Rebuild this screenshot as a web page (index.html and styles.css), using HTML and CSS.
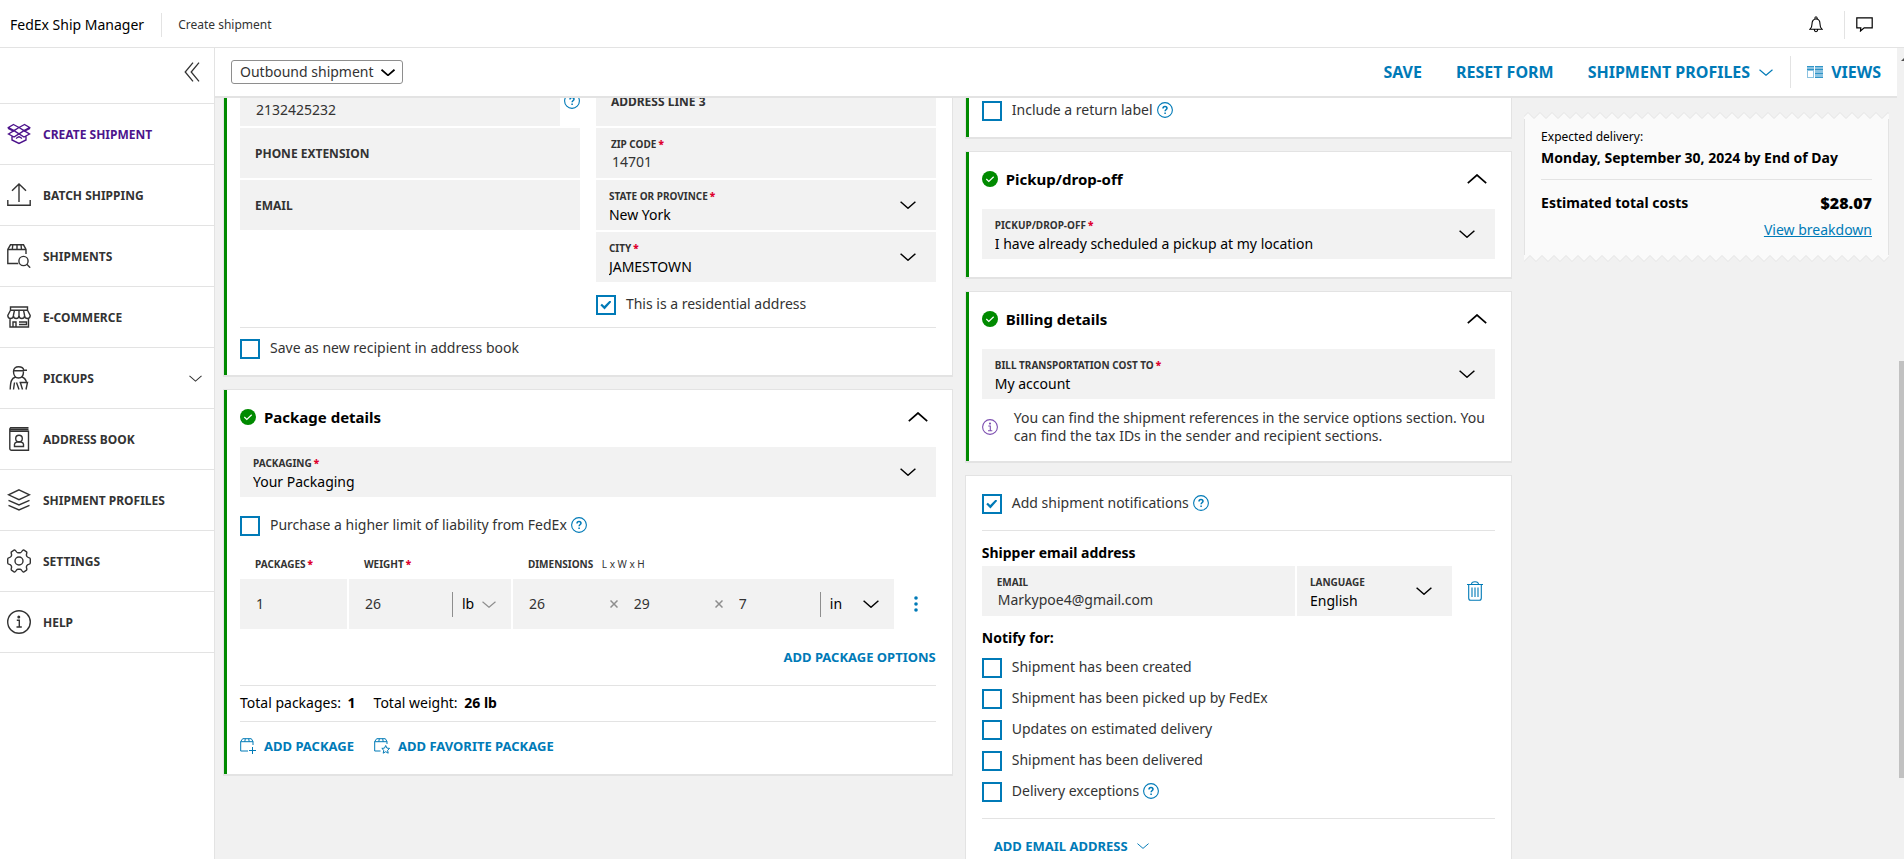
FILE: index.html
```html
<!DOCTYPE html>
<html lang="en">
<head>
<meta charset="utf-8">
<meta name="viewport" content="width=device-width, initial-scale=1">
<title>FedEx Ship Manager - Create shipment</title>
<link rel="stylesheet" href="styles.css">
</head>
<body>
<svg class="sprite" aria-hidden="true">
  <defs>
    <symbol id="chevron-down" viewBox="0 0 16 8"><path d="M.6.8 8 7.2 15.4.8"/></symbol>
    <symbol id="chevron-up" viewBox="0 0 20 10"><path d="M.8 9.2 10 1l9.2 8.2"/></symbol>
    <symbol id="help" viewBox="0 0 16 16"><circle cx="8" cy="8" r="7.4"/><path stroke-width="1.5" d="M6 6.400c0-1.300.9-2 2-2s2 .8 2 1.800c0 1.200-1.900 1.400-1.900 3.100M8.100 10.600v1.300"/></symbol>
    <symbol id="done" viewBox="0 0 16 16"><circle cx="8" cy="8" r="8" fill="#008a00" stroke="none"/><path stroke="#fff" stroke-width="1.200" d="m4.300 8 2.500 2.400L11.700 5.700"/></symbol>
  </defs>
</svg>

<header class="topbar">
  <span class="brand">FedEx Ship Manager</span>
  <span class="crumb">Create shipment</span>
  <div class="topbar-actions">
    <button class="icon-button" type="button" aria-label="Notifications">
      <svg class="icon bell" viewBox="0 0 14 17"><path d="M1 13.300c1.700-1.300 2-3 2-5.300 0-3 1.400-5 4-5s4 2 4 5c0 2.300.3 4 2 5.300ZM5.800 2.800C5.800 1.300 6.200.8 7 .8s1.200.5 1.200 2M5.300 13.800c.1 1.200.7 1.900 1.700 1.900s1.600-.7 1.700-1.900"/></svg>
    </button>
    <button class="icon-button feedback" type="button" aria-label="Feedback">
      <svg class="icon chat" viewBox="0 0 17 15"><path d="M.8.8h15.400v10H8.200L4.500 14l.3-3.200h-4Z"/></svg>
    </button>
  </div>
</header>

<div class="shell">
  <nav class="sidebar" aria-label="Main">
    <div class="collapse">
      <button class="icon-button" type="button" aria-label="Collapse menu">
        <svg class="icon collapse-icon" viewBox="0 0 16 20"><path d="M9 .6 1.200 10 9 19.400M15 .6 7.200 10l7.800 9.400"/></svg>
      </button>
    </div>
    <a class="nav-item active" href="#create">
      <svg class="icon nav-icon" viewBox="0 0 24 24"><path d="M6.500 2.500 12 5.500l5.500-3L22.500 5.500 17 8.600 12 5.500 7 8.600 1.500 5.500ZM1.500 5.500v1L7 9.500M1.500 12 7 8.600l5 3.200 5-3.200 5.500 3.400L17 15l-5-3.200L7 15ZM5 14v4l7 3.500 7-3.500v-4M12 5.500 7 8.600M12 14.500 9 16.500M12 14.500l3 2M22.500 5.500v1L17 9.500"/></svg>
      <span>CREATE SHIPMENT</span>
    </a>
    <a class="nav-item" href="#batch">
      <svg class="icon nav-icon" viewBox="0 0 24 24"><path d="M.8 17v5.200h22.400V17M12 19V1M5 7.800 12 1l7 6.800"/></svg>
      <span>BATCH SHIPPING</span>
    </a>
    <a class="nav-item" href="#shipments">
      <svg class="icon nav-icon" viewBox="0 0 24 24"><path d="M19 10V5.500L16.500.800h-13L.800 5.500V19.500h10.500M.800 5.500H19M10 .800v4.700M5.800.800 5.300 5.500M14 .800l.5 4.700"/><circle cx="16.500" cy="17" r="4.600"/><path d="m19.800 20.300 3.400 3.400"/></svg>
      <span>SHIPMENTS</span>
    </a>
    <a class="nav-item" href="#commerce">
      <svg class="icon nav-icon" viewBox="0 0 24 24"><path d="M3.500 2h17v3.200h-17ZM3.500 5.200.800 10.500c0 4 5.600 4 5.600 0 0 4 5.600 4 5.600 0 0 4 5.600 4 5.600 0 0 4 5.600 4 5.600 0L20.500 5.200M7.500 5.200 6.400 10.500M12 5.200v5.300M16.500 5.200l1.100 5.300M3 13.500V22h18.500v-8.500M6 22v-5h3v5M12 17h7.500v2.500H12"/></svg>
      <span>E-COMMERCE</span>
    </a>
    <a class="nav-item" href="#pickups">
      <svg class="icon nav-icon" viewBox="0 0 24 24"><path d="M6.500 5.500C6.500 2.500 8.500.800 11.500.800S16.500 2.500 16.700 4.300H20M6.500 4.700h10M6.500 5.500c0 4 2 6.500 5 6.500s5-2.500 5-6.500M8.500 11C4.500 12.500 3.500 15 3.200 23.500M15 11c2.500 1 4 2.500 4.500 5.500M7.500 16.500 6.500 23.500M9.500 16.500l2.500 7M12.500 16.500h8l-1.500 7M13.500 17l2 6.500"/></svg>
      <span>PICKUPS</span>
      <svg class="icon nav-chevron"><use href="#chevron-down"/></svg>
    </a>
    <a class="nav-item" href="#addresses">
      <svg class="icon nav-icon" viewBox="0 0 24 24"><path d="M21.500.800H3.500C2.500 1.500 2.500 3.500 3.500 4.200h18V23.300H4.500c-1 0-1.700-.6-1.700-1.700V2.500M3.500 2.500h18M7.500 19.500v-2.300c0-1 .7-1.700 2.300-2.200h4.400c1.600.5 2.300 1.200 2.300 2.200v2.300Z"/><circle cx="12" cy="11.500" r="3.300"/></svg>
      <span>ADDRESS BOOK</span>
    </a>
    <a class="nav-item" href="#profiles">
      <svg class="icon nav-icon" viewBox="0 0 24 24"><path d="m12 1.800 10.500 5L12 11.700 1.500 6.800ZM1.500 12.300 12 17l10.500-4.700M1.500 17.300 12 22l10.500-4.700"/></svg>
      <span>SHIPMENT PROFILES</span>
    </a>
    <a class="nav-item" href="#settings">
      <svg class="icon nav-icon" viewBox="0 0 24 24"><circle cx="12" cy="12" r="4"/><path d="M4.500 2.800 7.300 1c1.700-.4 1.700 2.600 3.500 2.800h2.400C15 3.600 15 .6 16.700 1l2.800 1.800c1.200 1.200-1.200 3 .5 4.700.8 1.600 3.300.6 3.300 2.600v3.800c0 2-2.500 1-3.300 2.600-1.700 1.700.7 3.500-.5 4.700L16.700 23c-1.700.4-1.700-2.600-3.500-2.800h-2.400C9 20.400 9 23.400 7.300 23l-2.800-1.800c-1.200-1.200 1.200-3-.5-4.700C3.200 14.900.700 15.900.700 13.900v-3.800c0-2 2.500-1 3.300-2.600 1.700-1.700-.7-3.500.5-4.700Z"/></svg>
      <span>SETTINGS</span>
    </a>
    <a class="nav-item" href="#help-center">
      <svg class="icon nav-icon" viewBox="0 0 24 24"><circle cx="12" cy="12" r="11.300"/><path d="M9.800 10.300H12.300V17M9.500 17h5.300"/><circle cx="11.800" cy="7" r=".8" fill="currentColor"/></svg>
      <span>HELP</span>
    </a>
  </nav>

  <main class="workspace">
    <div class="toolbar">
      <div class="direction">
        <select aria-label="Shipment direction"><option>Outbound shipment</option></select>
        <svg class="icon chev-14"><use href="#chevron-down"/></svg>
      </div>
      <div class="toolbar-actions">
        <button class="link-button" type="button">SAVE</button>
        <button class="link-button" type="button">RESET FORM</button>
        <button class="link-button" type="button">SHIPMENT PROFILES <svg class="icon chev-14"><use href="#chevron-down"/></svg></button>
        <button class="link-button views" type="button">
          <svg class="views-icon" viewBox="0 0 16 12"><path fill="#8cc3e1" d="M0 0h7v12H0zM8 0h8v12H8z"/><path fill="#fff" d="M1 5h5v6H1z"/><path fill="none" stroke="#2f95c8" d="M0 .5h7M0 3.500h7M8 .5h8M8 3.500h8M8 7.500h8M8 11.500h8"/></svg>
          VIEWS
        </button>
      </div>
    </div>

    <div class="scroller">
      <div class="columns">
        <div class="column">
          <section class="card done recipient" aria-label="Recipient">
            <div class="split">
              <div class="stack">
                <div class="with-help">
                  <div class="field"><div class="field-text value-only"><input type="text" aria-label="Phone number" value="2132425232"></div></div>
                  <button class="help-button" type="button" aria-label="Phone help"><svg class="icon help-icon"><use href="#help"/></svg></button>
                </div>
                <div class="field empty"><label for="ext">PHONE EXTENSION</label><input id="ext" type="text"></div>
                <div class="field empty"><label for="mail">EMAIL</label><input id="mail" type="email"></div>
              </div>
              <div class="stack">
                <div class="field empty"><label for="line3">ADDRESS LINE 3</label><input id="line3" type="text"></div>
                <div class="field"><div class="field-text"><label for="zip">ZIP CODE<b>*</b></label><input id="zip" type="text" value="14701"></div></div>
                <div class="field picker"><div class="field-text"><label for="state">STATE OR PROVINCE<b>*</b></label><select id="state"><option>New York</option></select></div><svg class="icon chev-16"><use href="#chevron-down"/></svg></div>
                <div class="field picker"><div class="field-text"><label for="city">CITY<b>*</b></label><select id="city"><option>JAMESTOWN</option></select></div><svg class="icon chev-16"><use href="#chevron-down"/></svg></div>
                <div class="check residential"><input id="res" type="checkbox" checked><label for="res">This is a residential address</label></div>
              </div>
            </div>
            <div class="check save-recipient"><input id="save" type="checkbox"><label for="save">Save as new recipient in address book</label></div>
          </section>

          <section class="card done package">
            <div class="card-head">
              <svg class="icon status"><use href="#done"/></svg>
              <h2>Package details</h2>
              <button class="icon-button" type="button" aria-label="Collapse package details"><svg class="icon chev-20"><use href="#chevron-up"/></svg></button>
            </div>
            <div class="field picker"><div class="field-text"><label for="packaging">PACKAGING<b>*</b></label><select id="packaging"><option>Your Packaging</option></select></div><svg class="icon chev-16"><use href="#chevron-down"/></svg></div>
            <div class="check liability"><input id="liab" type="checkbox"><label for="liab">Purchase a higher limit of liability from FedEx</label><button class="help-button" type="button" aria-label="Liability help"><svg class="icon help-icon"><use href="#help"/></svg></button></div>
            <div class="package-grid package-labels">
              <label for="count">PACKAGES<b>*</b></label>
              <label for="weight">WEIGHT<b>*</b></label>
              <label for="length">DIMENSIONS <span>L x W x H</span></label>
            </div>
            <div class="package-grid">
              <div class="field measures"><input id="count" type="text" value="1"></div>
              <div class="field measures">
                <input id="weight" type="text" value="26">
                <div class="unit"><select class="unit-lb" aria-label="Weight unit"><option>lb</option></select><svg class="icon chev-14 muted"><use href="#chevron-down"/></svg></div>
              </div>
              <div class="field measures">
                <input id="length" type="text" value="26"><svg class="icon times" viewBox="0 0 8 8"><path d="m.5.5 7 7m0-7-7 7"/></svg>
                <input type="text" aria-label="Width" value="29"><svg class="icon times" viewBox="0 0 8 8"><path d="m.5.5 7 7m0-7-7 7"/></svg>
                <input type="text" aria-label="Height" value="7">
                <div class="unit"><select class="unit-in" aria-label="Dimension unit"><option>in</option></select><svg class="icon chev-16"><use href="#chevron-down"/></svg></div>
              </div>
              <button class="icon-button more" type="button" aria-label="More options"><svg viewBox="0 0 4 16"><circle cx="2" cy="2" r="1.800"/><circle cx="2" cy="8" r="1.800"/><circle cx="2" cy="14" r="1.800"/></svg></button>
            </div>
            <div class="options-row"><button class="link-button small" type="button">ADD PACKAGE OPTIONS</button></div>
            <div class="totals"><span>Total packages: <strong>1</strong></span><span>Total weight: <strong>26 lb</strong></span></div>
            <div class="package-actions">
              <button class="link-button small" type="button"><svg class="icon box-icon" viewBox="0 0 16 16"><path d="M13 7V3.500L11.300.7H2.700L.700 3.500V13H8M.700 3.700H13M5.300.7 4.800 3.700M8.700.7l.5 3M12.500 9v7M9 12.500h7"/></svg>ADD PACKAGE</button>
              <button class="link-button small" type="button"><svg class="icon box-icon" viewBox="0 0 16 16"><path d="M13 6V3.500L11.300.7H2.700L.700 3.500V13H6.500M.700 3.700H13M5.300.7 4.800 3.700M8.700.7l.5 3M11.700 7.500l1.200 2.600 2.700.3-2 1.900.6 2.900-2.500-1.500-2.500 1.500.6-2.900-2-1.900 2.700-.3Z"/></svg>ADD FAVORITE PACKAGE</button>
            </div>
          </section>
        </div>

        <div class="column">
          <section class="card done return-label" aria-label="Return label">
            <div class="check"><input id="ret" type="checkbox"><label for="ret">Include a return label</label><button class="help-button" type="button" aria-label="Return label help"><svg class="icon help-icon"><use href="#help"/></svg></button></div>
          </section>

          <section class="card done pickup">
            <div class="card-head">
              <svg class="icon status"><use href="#done"/></svg>
              <h2>Pickup/drop-off</h2>
              <button class="icon-button" type="button" aria-label="Collapse pickup"><svg class="icon chev-20"><use href="#chevron-up"/></svg></button>
            </div>
            <div class="field picker"><div class="field-text"><label for="pickup">PICKUP/DROP-OFF<b>*</b></label><select id="pickup"><option>I have already scheduled a pickup at my location</option></select></div><svg class="icon chev-16"><use href="#chevron-down"/></svg></div>
          </section>

          <section class="card done">
            <div class="card-head">
              <svg class="icon status"><use href="#done"/></svg>
              <h2>Billing details</h2>
              <button class="icon-button" type="button" aria-label="Collapse billing"><svg class="icon chev-20"><use href="#chevron-up"/></svg></button>
            </div>
            <div class="field picker"><div class="field-text"><label for="bill">BILL TRANSPORTATION COST TO<b>*</b></label><select id="bill"><option>My account</option></select></div><svg class="icon chev-16"><use href="#chevron-down"/></svg></div>
            <div class="note">
              <svg class="icon info-icon" viewBox="0 0 16 16"><circle cx="8" cy="8" r="7.400"/><path d="M6.300 7H8.300v4.800M6 11.800h4.300"/><circle cx="8" cy="4.600" r=".5"/></svg>
              <p>You can find the shipment references in the service options section. You can find the tax IDs in the sender and recipient sections.</p>
            </div>
          </section>

          <section class="card notifications" aria-label="Notifications">
            <div class="check"><input id="notify" type="checkbox" checked><label for="notify">Add shipment notifications</label><button class="help-button" type="button" aria-label="Notification help"><svg class="icon help-icon"><use href="#help"/></svg></button></div>
            <h3 class="shipper">Shipper email address</h3>
            <div class="email-row">
              <div class="field"><div class="field-text"><label for="shipper-mail">EMAIL</label><input id="shipper-mail" type="text" value="Markypoe4@gmail.com"></div></div>
              <div class="field picker"><div class="field-text"><label for="lang">LANGUAGE</label><select id="lang"><option>English</option></select></div><svg class="icon chev-16"><use href="#chevron-down"/></svg></div>
              <button class="icon-button delete" type="button" aria-label="Delete email"><svg class="icon trash" viewBox="0 0 16 20"><path d="M0 3.500h16M4.500 3.500C4.500 1.500 5.500.700 8 .700s3.500.8 3.500 2.800M1.700 3.500V17c0 1.500.6 2.300 2 2.300h8.600c1.400 0 2-.8 2-2.300V3.500M5 6.500v9.500M8 6.500v9.500M11 6.500v9.500"/></svg></button>
            </div>
            <h3 class="notify-for">Notify for:</h3>
            <div class="check-list">
              <div class="check"><input id="n1" type="checkbox"><label for="n1">Shipment has been created</label></div>
              <div class="check"><input id="n2" type="checkbox"><label for="n2">Shipment has been picked up by FedEx</label></div>
              <div class="check"><input id="n3" type="checkbox"><label for="n3">Updates on estimated delivery</label></div>
              <div class="check"><input id="n4" type="checkbox"><label for="n4">Shipment has been delivered</label></div>
              <div class="check"><input id="n5" type="checkbox"><label for="n5">Delivery exceptions</label><button class="help-button" type="button" aria-label="Exceptions help"><svg class="icon help-icon"><use href="#help"/></svg></button></div>
            </div>
            <div class="add-email"><button class="link-button small" type="button">ADD EMAIL ADDRESS <svg class="icon chev-12"><use href="#chevron-down"/></svg></button></div>
          </section>
        </div>

        <aside class="column summary" aria-label="Shipment summary">
          <svg class="tear" aria-hidden="true"><defs><pattern id="tear-top" width="12" height="7" patternUnits="userSpaceOnUse"><path d="M-2 6.500 4 .500l6 6 6-6V7H-2Z" fill="#fafafa"/><path d="m-2 6.500 6-6 6 6 6-6" fill="none" stroke="#e3e3e3"/></pattern></defs><rect width="100%" height="7" fill="url(#tear-top)"/></svg>
          <div class="receipt">
            <p class="receipt-caption">Expected delivery:</p>
            <p class="receipt-date">Monday, September 30, 2024 by End of Day</p>
            <div class="receipt-total"><span>Estimated total costs</span><strong>$28.07</strong></div>
            <a class="breakdown" href="#breakdown">View breakdown</a>
          </div>
          <svg class="tear" aria-hidden="true"><defs><pattern id="tear-bottom" width="12" height="7" patternUnits="userSpaceOnUse"><path d="M0 6.500 6 .500l6 6V0H0Z" fill="#fafafa"/><path d="m-6 .500 6 6 6-6 6 6 6-6" fill="none" stroke="#e3e3e3"/></pattern></defs><rect width="100%" height="7" fill="url(#tear-bottom)"/></svg>
        </aside>
      </div>
    </div>
  </main>
  <div class="scrollbar" aria-hidden="true"><div class="scroll-arrow"></div><div class="scroll-thumb"></div></div>
</div>
</body>
</html>
```
FILE: styles.css
```css
:root {
  --blue: #007ab7;
  --purple: #4d148c;
  --green: #008a00;
  --line: #e3e3e3;
  --fill: #f2f2f2;
  --page: #f1f1f1;
  --text: #333;
}

* {
  box-sizing: border-box;
}

body {
  display: flex;
  flex-direction: column;
  height: 100vh;
  margin: 0;
  overflow: hidden;
  background: #fff;
  color: var(--text);
  font: 14px/20px "Noto Sans", "Open Sans", sans-serif;
}

h2, h3, p {
  margin: 0;
}

button, input, select {
  margin: 0;
  padding: 0;
  border: 0;
  border-radius: 0;
  background: none;
  color: inherit;
  font: inherit;
}

button {
  cursor: pointer;
}

select {
  appearance: none;
}

.sprite {
  position: absolute;
  width: 0;
  height: 0;
}

.icon {
  display: block;
  flex: none;
  fill: none;
  stroke: currentColor;
  stroke-width: 1.3;
}

.icon-button, .help-button {
  display: flex;
  align-items: center;
  justify-content: center;
  flex: none;
}

.chev-12 { width: 12px; height: 6px; }
.chev-14 { width: 14px; height: 7px; }
.chev-16 { width: 16px; height: 8px; stroke-width: 1.5; }
.chev-20 { width: 20px; height: 10px; stroke-width: 1.7; }
.muted { color: #8e8e8e; }

.link-button {
  display: flex;
  align-items: center;
  color: var(--blue);
  font-size: 14px;
  font-weight: 700;
}

.link-button.small {
  font-size: 13px;
}

/* Header */

.topbar {
  display: flex;
  align-items: center;
  flex: none;
  height: 48px;
  padding: 2px 31px 0 10px;
  border-bottom: 1px solid var(--line);
}

.brand {
  color: #000;
}

.crumb {
  margin-left: 17px;
  padding: 2px 0 2px 16px;
  border-left: 1px solid var(--line);
  font-size: 12px;
}

.topbar-actions {
  display: flex;
  align-items: center;
  margin-left: auto;
  color: #000;
}

.bell { width: 14px; height: 17px; margin-right: 21px; stroke-width: 1.1; }
.chat { width: 17px; height: 15px; stroke-width: 1.2; }

.feedback {
  height: 28px;
  padding-left: 11px;
  border-left: 1px solid var(--line);
}

/* Shell */

.shell {
  display: flex;
  flex: 1;
  min-height: 0;
}

.sidebar {
  flex: none;
  width: 215px;
  border-right: 1px solid var(--line);
}

.collapse {
  display: flex;
  align-items: center;
  justify-content: flex-end;
  height: 56px;
  padding-right: 14px;
  padding-bottom: 8px;
  border-bottom: 1px solid var(--line);
}

.collapse-icon { width: 16px; height: 20px; }

.nav-item {
  display: flex;
  align-items: center;
  gap: 12px;
  height: 61px;
  padding: 0 12px 0 7px;
  border-bottom: 1px solid var(--line);
  color: var(--text);
  font-size: 12px;
  font-weight: 700;
  text-decoration: none;
}

.nav-item span { padding-top: 1px; }
.nav-item.active { color: var(--purple); }
.nav-icon { width: 24px; height: 24px; stroke-width: 1.4; }
.nav-chevron { width: 13px; height: 7px; margin-left: auto; }

.workspace {
  display: flex;
  flex: 1;
  flex-direction: column;
  min-width: 0;
}

.toolbar {
  display: flex;
  align-items: center;
  justify-content: space-between;
  flex: none;
  height: 50px;
  padding: 0 16px;
  border-bottom: 2px solid var(--line);
}

.direction {
  display: flex;
  align-items: center;
  gap: 3px;
  height: 24px;
  padding: 0 7px 0 8px;
  border: 1px solid #8e8e8e;
  border-radius: 3px;
}

.direction select {
  width: 138px;
}

.direction .icon {
  color: #000;
  stroke-width: 2;
}

.toolbar-actions {
  display: flex;
  align-items: center;
  gap: 34px;
}

.toolbar-actions .link-button { font-size: 16px; }
.toolbar-actions .chev-14 { margin-left: 9px; }

.toolbar-actions .views {
  gap: 8px;
  height: 32px;
  margin-left: -17px;
  padding-left: 16px;
  border-left: 1px solid var(--line);
}

.views-icon { width: 16px; height: 12px; }

.scroller {
  flex: 1;
  min-height: 0;
  overflow: hidden;
  background: var(--page);
}

.columns {
  display: grid;
  grid-template-columns: 4fr 3fr 2fr;
  align-items: start;
  gap: 12px;
  margin-top: -24px;
  padding: 0 8px;
}

.column {
  display: flex;
  flex-direction: column;
  gap: 12px;
  min-width: 0;
}

/* Cards */

.card {
  padding: 0 16px 16px;
  border: 1px solid var(--line);
  border-bottom-width: 2px;
  background: #fff;
}

.card.done { box-shadow: inset 3px 0 var(--green); }

.recipient { padding-top: 1px; }
.package { padding-bottom: 20px; }
.return-label { padding-top: 26px; }
.pickup { padding-bottom: 18px; }
.notifications { padding-top: 18px; padding-bottom: 24px; }

.card-head {
  display: flex;
  align-items: center;
  gap: 8px;
  padding: 16px 8px 19px 0;
  color: #000;
}

.card-head h2 {
  flex: 1;
  font-size: 15px;
  line-height: 22px;
}

.status { width: 16px; height: 16px; }

.split {
  display: grid;
  grid-template-columns: 1fr 1fr;
  gap: 16px;
}

.stack {
  display: flex;
  flex-direction: column;
  gap: 2px;
}

.with-help {
  display: flex;
  gap: 4px;
}

.with-help .field { flex: 1; }
.with-help .help-button { height: 50px; }

.help-button { color: var(--blue); }
.help-icon { width: 16px; height: 16px; stroke-width: 1.1; }

/* Fields */

.field {
  display: flex;
  align-items: center;
  min-width: 0;
  height: 50px;
  padding-left: 15px;
  background: var(--fill);
}

.field label {
  font-size: 10px;
  font-weight: 700;
  line-height: 14px;
}

b {
  margin-left: 2px;
  color: #de002e;
}

.field input {
  flex: 1;
  width: 100%;
  min-width: 0;
  outline: none;
}

.field-text {
  display: flex;
  flex: 1;
  flex-direction: column;
  min-width: 0;
  padding-top: 2px;
}

.field-text label { margin-bottom: 1px; }

.field-text input {
  height: 20px;
  padding-left: 1px;
}

.field-text.value-only { padding-top: 18px; }

.field.empty {
  gap: 12px;
  padding-top: 2px;
}

.field.empty label {
  flex: none;
  font-size: 12px;
}

.picker {
  padding: 0 20px 0 13px;
}

.picker .field-text { padding-top: 4px; }
.picker .field-text label { margin-bottom: 2px; }

.picker select {
  height: 20px;
  color: #000;
}

.picker .icon { color: #000; }

/* Checkboxes */

.check {
  display: flex;
  align-items: center;
  height: 20px;
}

.check input {
  display: grid;
  flex: none;
  place-items: center;
  appearance: none;
  width: 20px;
  height: 20px;
  margin-right: 10px;
  border: 2px solid var(--blue);
}

.check input:checked::after {
  width: 11px;
  height: 9px;
  background: var(--blue);
  clip-path: polygon(0 52%, 14% 36%, 36% 62%, 86% 0, 100% 14%, 38% 100%);
  content: "";
}

.check label { padding-bottom: 2px; }

.check .help-button {
  margin-left: 4px;
  padding-bottom: 3px;
}

.residential { margin-top: 11px; }

.save-recipient {
  height: 32px;
  margin-top: 12px;
  padding-top: 11px;
  border-top: 1px solid var(--line);
}

.liability { margin-top: 19px; }

/* Package rows */

.package-grid {
  display: grid;
  grid-template-columns: 107fr 162fr 381fr 40fr;
  gap: 2px;
}

.package-labels {
  margin: 21px 0 8px;
  font-size: 10px;
  font-weight: 700;
  line-height: 14px;
}

.package-labels label { padding-left: 15px; }
.package-labels span { margin-left: 6px; font-weight: 400; }

.measures { padding-left: 0; }
.measures input { margin-left: 16px; }
.times { width: 8px; height: 8px; color: #8e8e8e; stroke-width: 1.5; }

.unit {
  display: flex;
  align-items: center;
  flex: none;
  height: 25px;
  padding: 0 15px 0 9px;
  border-left: 1px solid #8e8e8e;
  color: #000;
}

.unit-lb { width: 20px; }
.unit-in { width: 33px; }
.unit .muted { color: #8e8e8e; }

.more svg {
  width: 4px;
  height: 16px;
  fill: var(--blue);
}

.options-row {
  display: flex;
  justify-content: flex-end;
  padding: 18px 0;
  border-bottom: 1px solid var(--line);
}

.totals {
  display: flex;
  gap: 18px;
  padding: 7px 0 8px;
  border-bottom: 1px solid var(--line);
  color: #000;
}

.totals strong { margin-left: 3px; }

.package-actions {
  display: flex;
  gap: 20px;
  padding-top: 15px;
}

.package-actions .link-button {
  gap: 8px;
  height: 17px;
}

.box-icon { width: 16px; height: 16px; stroke-width: 1; }

/* Billing note */

.note {
  display: flex;
  align-items: center;
  gap: 16px;
  margin-top: 10px;
  line-height: 18px;
}

.info-icon { width: 16px; height: 16px; color: #7d4fb0; stroke-width: 1.1; }

/* Notifications */

h3 {
  color: #000;
  font-size: 14px;
  line-height: 20px;
}

.shipper {
  margin-top: 16px;
  padding: 12px 0 3px;
  border-top: 1px solid var(--line);
}

.email-row {
  display: grid;
  grid-template-columns: 313fr 155fr 41fr;
  gap: 2px;
}

.trash { width: 16px; height: 20px; color: var(--blue); stroke-width: 1.1; }

.notify-for { margin: 12px 0 10px; }

.check-list {
  display: flex;
  flex-direction: column;
  gap: 11px;
}

.add-email {
  margin-top: 16px;
  padding: 17px 0 0 12px;
  border-top: 1px solid var(--line);
}

.add-email .icon { margin-left: 9px; }

/* Summary */

.summary {
  gap: 0;
  padding-top: 38px;
  color: #000;
}

.tear {
  display: block;
  width: 100%;
  height: 7px;
}

.receipt {
  padding: 9px 16px 15px;
  border: solid var(--line);
  border-width: 0 1px;
  background: #fafafa;
}

.receipt-caption {
  font-size: 12px;
  line-height: 18px;
}

.receipt-date {
  margin-top: 2px;
  padding-bottom: 11px;
  border-bottom: 1px solid var(--line);
  font-weight: 700;
}

.receipt-total {
  display: flex;
  justify-content: space-between;
  margin-top: 13px;
  font-weight: 700;
}

.receipt-total strong { font-size: 16px; }

.breakdown {
  display: block;
  width: max-content;
  margin: 7px 0 0 auto;
  color: var(--blue);
}

/* Page scrollbar */

.scrollbar {
  flex: none;
  width: 7px;
  padding: 9px 0 0 2px;
  overflow: hidden;
  background: var(--page);
}

.scroll-arrow {
  width: 0;
  margin-left: 2px;
  border: solid transparent;
  border-width: 0 4px 4px;
  border-bottom-color: #505050;
}

.scroll-thumb {
  height: 52%;
  margin-top: 300px;
  background: #c1c1c1;
}
```
